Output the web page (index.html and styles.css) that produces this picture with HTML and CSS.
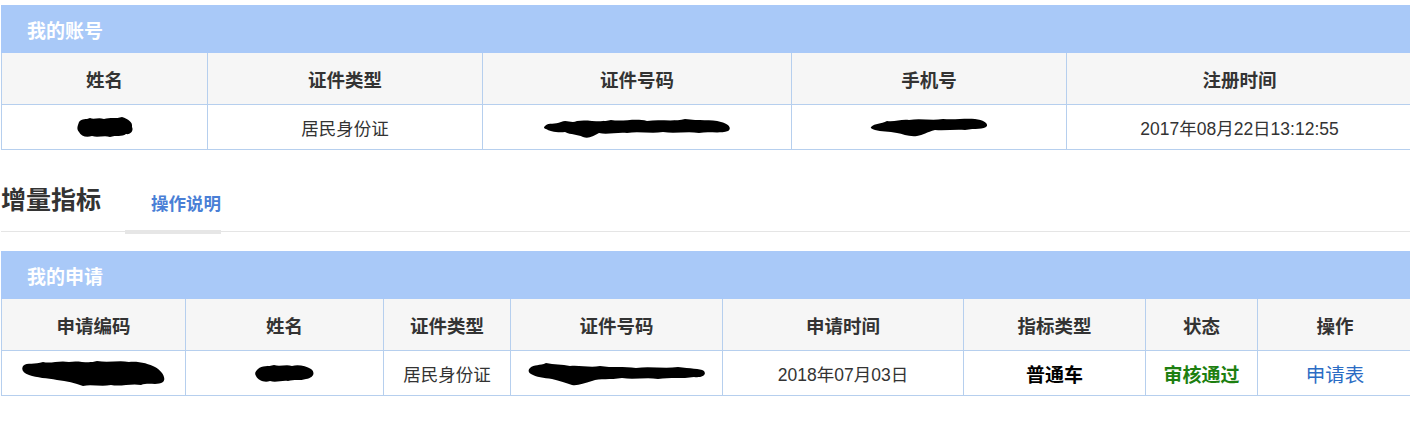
FILE: index.html
```html
<!DOCTYPE html>
<html lang="zh-CN">
<head>
<meta charset="utf-8">
<title>我的账号</title>
<link rel="stylesheet" href="styles.css">
</head>
<body>
<div class="page">
  <section class="panel">
    <div class="panel-title">我的账号</div>
    <table class="grid">
      <colgroup>
        <col class="c206"><col class="c275"><col class="c309"><col class="c275"><col>
      </colgroup>
      <thead>
        <tr><th>姓名</th><th>证件类型</th><th>证件号码</th><th>手机号</th><th>注册时间</th></tr>
      </thead>
      <tbody>
        <tr>
          <td><svg class="blob" width="58" height="22" viewBox="0 0 58 22"><path d="M3 6 C6 2 10 4 14 2 C18 4 22 1 28 3 C34 1 40 3 46 1 C52 3 57 6 56 11 C58 15 54 19 50 18 C46 21 40 19 34 21 C28 19 22 22 16 20 C10 22 5 20 3 16 C0 13 2 9 3 6Z"/></svg></td>
          <td>居民身份证</td>
          <td><svg class="blob" width="188" height="23" viewBox="0 0 188 23"><path d="M2 10 C6 6 12 9 18 6 C24 3 28 8 34 5 C44 3 56 7 68 4 C80 6 92 2 104 5 C116 3 130 6 142 3 C156 5 168 3 178 6 C186 8 189 12 185 15 C176 18 166 15 156 17 C144 15 132 18 120 16 C108 18 96 15 84 17 C74 16 64 19 56 17 C50 20 46 23 40 21 C34 18 28 19 22 16 C14 17 6 15 3 13 C0 12 1 11 2 10Z"/></svg></td>
          <td><svg class="blob" width="120" height="22" viewBox="0 0 120 22"><path d="M2 11 C6 7 12 8 18 5 C26 6 32 3 40 4 C52 2 62 5 74 3 C86 4 96 2 106 3 C114 4 119 7 118 10 C115 14 106 12 96 14 C86 13 76 15 66 14 C58 16 54 19 48 20 C40 21 34 18 28 17 C20 15 12 16 6 14 C3 13 1 12 2 11Z"/></svg></td>
          <td>2017年08月22日13:12:55</td>
        </tr>
      </tbody>
    </table>
  </section>

  <div class="tabs">
    <h2 class="tabs-heading">增量指标</h2>
    <a class="tab" href="#">操作说明</a>
  </div>

  <section class="panel">
    <div class="panel-title">我的申请</div>
    <table class="grid">
      <colgroup>
        <col class="c184"><col class="c198"><col class="c127"><col class="c212"><col class="c241"><col class="c182"><col class="c112"><col>
      </colgroup>
      <thead>
        <tr><th>申请编码</th><th>姓名</th><th>证件类型</th><th>证件号码</th><th>申请时间</th><th>指标类型</th><th>状态</th><th>操作</th></tr>
      </thead>
      <tbody>
        <tr>
          <td><svg class="blob" width="145" height="30" viewBox="0 0 145 30"><path d="M2 8 C6 4 14 7 22 4 C30 6 38 2 48 4 C58 2 66 6 76 3 C88 5 98 2 108 4 C118 3 128 6 134 9 C140 12 146 20 142 24 C136 28 128 24 120 27 C110 25 100 29 90 27 C80 29 70 26 62 28 C54 25 46 23 36 22 C26 20 16 20 8 17 C2 15 0 12 2 8Z"/></svg></td>
          <td><svg class="blob" width="61" height="21" viewBox="0 0 61 21"><path d="M4 6 C8 2 14 4 20 2 C26 4 32 1 38 3 C44 1 52 3 57 6 C62 10 59 15 52 16 C46 18 40 16 34 18 C28 17 22 20 16 18 C10 20 4 17 2 13 C0 10 2 8 4 6Z"/></svg></td>
          <td>居民身份证</td>
          <td><svg class="blob" width="178" height="27" viewBox="0 0 178 27"><path d="M2 8 C6 4 12 6 18 3 C26 5 34 4 42 6 C52 5 62 8 72 6 C84 8 96 6 108 8 C122 6 136 9 150 7 C162 9 172 8 176 11 C179 15 174 18 166 17 C154 19 142 17 130 19 C118 17 106 20 94 18 C82 20 72 18 64 21 C56 23 50 26 44 25 C38 23 32 21 24 19 C16 18 8 17 3 14 C0 12 0 10 2 8Z"/></svg></td>
          <td>2018年07月03日</td>
          <td class="strong">普通车</td>
          <td class="ok">审核通过</td>
          <td><a class="link" href="#">申请表</a></td>
        </tr>
      </tbody>
    </table>
  </section>
</div>
</body>
</html>
```

FILE: styles.css
```css
html, body {
  margin: 0;
  padding: 0;
  overflow: hidden;
  background: #fff;
}

body {
  font-family: "Liberation Sans", "Noto Sans CJK SC", sans-serif;
  color: #333;
}

.page {
  width: 1412px;
  margin-left: 1px;
  padding-top: 5px;
}

.panel-title {
  height: 48px;
  display: flex;
  align-items: center;
  padding-left: 26px;
  background: #a9c9f8;
  color: #fff;
  font-size: 19px;
  font-weight: bold;
}

.grid {
  width: 100%;
  border-collapse: collapse;
  table-layout: fixed;
}

.c206 { width: 206px; }
.c275 { width: 275px; }
.c309 { width: 309px; }
.c184 { width: 184px; }
.c198 { width: 198px; }
.c127 { width: 127px; }
.c212 { width: 212px; }
.c241 { width: 241px; }
.c182 { width: 182px; }
.c112 { width: 112px; }

.grid th,
.grid td {
  border: 1px solid #b6cfee;
  text-align: center;
  vertical-align: middle;
  padding: 0;
}

.grid th {
  border-top: none;
  height: 51px;
  background: #f6f6f6;
  font-size: 18.5px;
  font-weight: bold;
  color: #333;
}

.grid td {
  height: 44px;
  font-size: 17.5px;
  color: #333;
}

.blob {
  display: inline-block;
  vertical-align: middle;
  fill: #000;
}

.grid td.strong {
  font-weight: bold;
  font-size: 19px;
  color: #000;
}

.grid td.ok {
  font-weight: bold;
  font-size: 19px;
  color: #1d7f10;
}

.link {
  font-size: 19.5px;
  color: #2b6cc4;
  text-decoration: none;
}

.tabs {
  display: flex;
  align-items: flex-end;
  gap: 24px;
  margin-top: 34px;
  margin-bottom: 19px;
  border-bottom: 1px solid #e5e5e5;
}

.tabs-heading {
  margin: 0;
  padding-bottom: 15px;
  line-height: 32px;
  font-size: 25px;
  font-weight: bold;
  color: #333;
}

.tab {
  padding: 0 0 14px 26px;
  margin-bottom: -3px;
  line-height: 24px;
  font-size: 17.5px;
  font-weight: bold;
  color: #4a7fd6;
  text-decoration: none;
  border-bottom: 4px solid #e6e6e6;
}
```
